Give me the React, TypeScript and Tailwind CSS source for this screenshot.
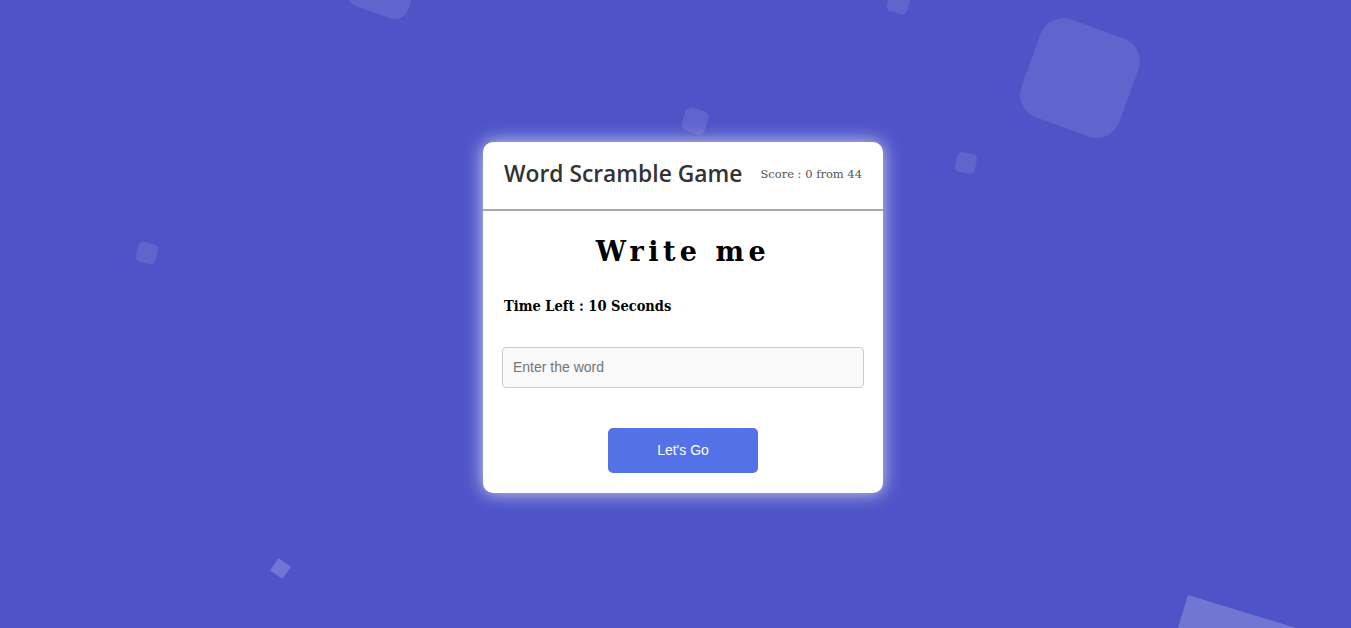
import React from "react";

export default function App() {
  return (
    <div className="relative h-[628px] w-full overflow-hidden bg-[#4e54c8] flex items-center justify-center pl-[15px] pt-[6px]">
      <div className="absolute left-[352px] top-[-50px] h-[64px] w-[64px] rounded-[14px] bg-white/10 rotate-[20deg]" />
      <div className="absolute left-[888px] top-[-8px] h-[21px] w-[21px] rounded-[5px] bg-white/10 rotate-[15deg]" />
      <div className="absolute left-[1028px] top-[26px] h-[104px] w-[104px] rounded-[24px] bg-white/10 rotate-[20deg]" />
      <div className="absolute left-[683px] top-[109px] h-[24px] w-[24px] rounded-[6px] bg-white/10 rotate-[18deg]" />
      <div className="absolute left-[956px] top-[153px] h-[20px] w-[20px] rounded-[5px] bg-white/10 rotate-[12deg]" />
      <div className="absolute left-[137px] top-[243px] h-[20px] w-[20px] rounded-[5px] bg-white/10 rotate-[15deg]" />
      <div className="absolute left-[273px] top-[561px] h-[15px] w-[15px] rounded-[1px] bg-white/20 rotate-[35deg]" />
      <div className="absolute left-[1188px] top-[595px] h-[130px] w-[130px] bg-white/20 rotate-[17deg] origin-top-left" />

      <div className="relative flex w-[400px] flex-col rounded-[10px] bg-white shadow-[0_0_18px_rgba(255,255,255,0.75)]">
        <header className="flex h-[69px] items-center justify-between border-b-2 border-[#aaaaaa] px-[21px]">
          <h1 className="font-['Open_Sans',sans-serif] text-[22.8px] font-semibold text-[#333333] -mt-[2px]">
            Word Scramble Game
          </h1>
          <p className="font-['DejaVu_Serif',serif] text-[11.5px] text-[#555555]">
            Score : 0 from 44
          </p>
        </header>
        <section className="flex flex-col px-[19px] pt-[21px] pb-[20px]">
          <p className="font-['DejaVu_Serif',serif] text-center text-[27px] font-bold tracking-[4.5px] text-black leading-[40px]">
            Write me
          </p>
          <p className="font-['DejaVu_Serif',serif] font-stretch-condensed mt-[24px] pl-[2px] text-[14.5px] font-bold text-black leading-[20px]">
            Time Left : 10 Seconds
          </p>
          <input
            type="text"
            placeholder="Enter the word"
            className="font-['Liberation_Sans',Arial,sans-serif] mt-[31px] block w-full h-[41px] rounded-[4px] border border-[#cccccc] bg-[#f9f9f9] px-[10px] text-[14px] text-[#333] placeholder:text-[#757575] outline-none"
          />
          <div className="mt-[40px] flex justify-center">
            <button className="font-['Liberation_Sans',Arial,sans-serif] w-[150px] h-[45px] rounded-[5px] bg-[#5372e8] text-white text-[14px]">
              Let's Go
            </button>
          </div>
        </section>
      </div>
    </div>
  );
}
